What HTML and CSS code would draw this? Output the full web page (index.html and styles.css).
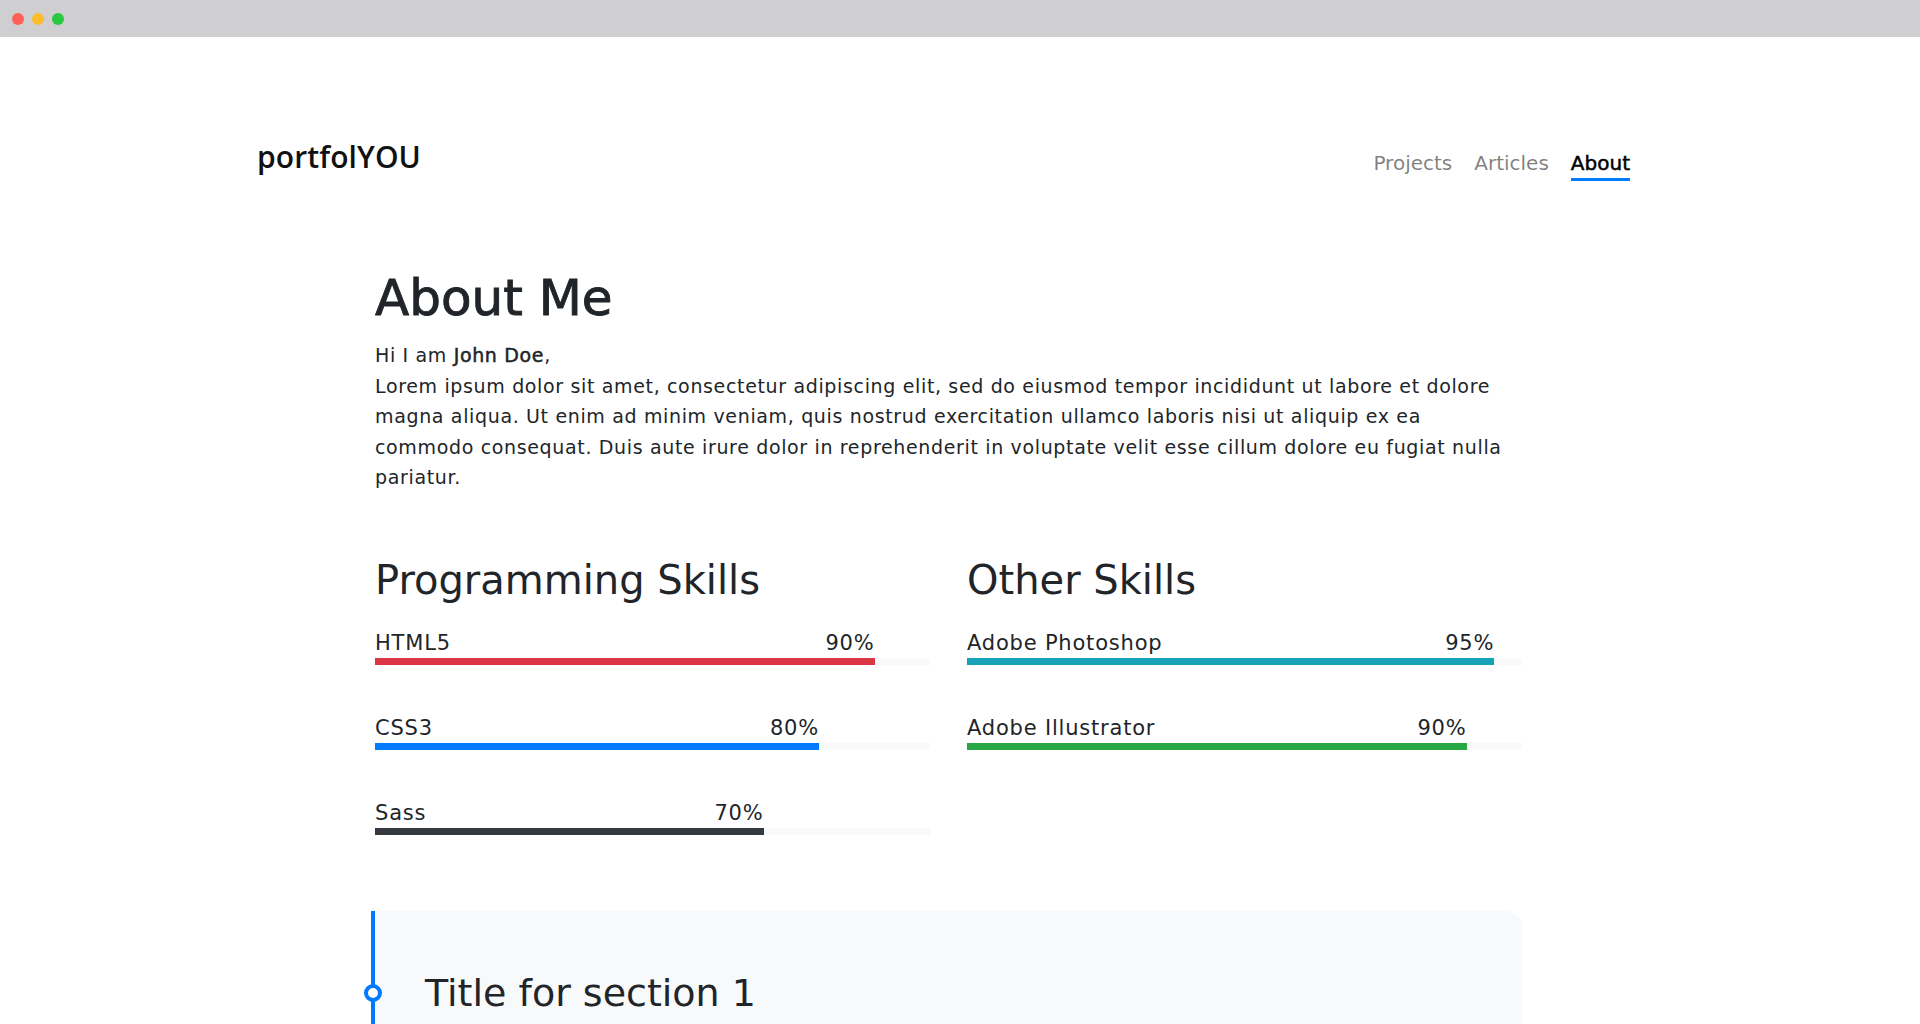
FILE: index.html
```html
<!DOCTYPE html>
<html lang="en">
<head>
<meta charset="utf-8">
<title>About - portfolYOU</title>
<link rel="stylesheet" href="styles.css">
</head>
<body>
<div class="titlebar">
  <span class="dot dot-red"></span>
  <span class="dot dot-yellow"></span>
  <span class="dot dot-green"></span>
</div>

<header class="header">
  <a class="brand" href="#">portfolYOU</a>
  <nav class="nav">
    <a class="nav-link" href="#">Projects</a>
    <a class="nav-link" href="#">Articles</a>
    <a class="nav-link active" href="#">About</a>
  </nav>
</header>

<main class="content">
  <h1 class="page-title">About Me</h1>
  <p class="intro">Hi I am <strong>John Doe</strong>,<br>Lorem ipsum dolor sit amet, consectetur adipiscing elit, sed do eiusmod tempor incididunt ut labore et dolore magna aliqua. Ut enim ad minim veniam, quis nostrud exercitation ullamco laboris nisi ut aliquip ex ea commodo consequat. Duis aute irure dolor in reprehenderit in voluptate velit esse cillum dolore eu fugiat nulla pariatur.</p>

  <div class="skills">
    <section class="skill-group">
      <h2 class="skill-title">Programming Skills</h2>
      <div class="skill">
        <div class="skill-head" style="width:90%"><span>HTML5</span><span>90%</span></div>
        <div class="track"><div class="fill fill-red" style="width:90%"></div></div>
      </div>
      <div class="skill">
        <div class="skill-head" style="width:80%"><span>CSS3</span><span>80%</span></div>
        <div class="track"><div class="fill fill-blue" style="width:80%"></div></div>
      </div>
      <div class="skill">
        <div class="skill-head" style="width:70%"><span>Sass</span><span>70%</span></div>
        <div class="track"><div class="fill fill-dark" style="width:70%"></div></div>
      </div>
    </section>
    <section class="skill-group">
      <h2 class="skill-title">Other Skills</h2>
      <div class="skill">
        <div class="skill-head" style="width:95%"><span>Adobe Photoshop</span><span>95%</span></div>
        <div class="track"><div class="fill fill-teal" style="width:95%"></div></div>
      </div>
      <div class="skill">
        <div class="skill-head" style="width:90%"><span>Adobe Illustrator</span><span>90%</span></div>
        <div class="track"><div class="fill fill-green" style="width:90%"></div></div>
      </div>
    </section>
  </div>

  <section class="timeline">
    <div class="timeline-item">
      <span class="timeline-dot"></span>
      <h3 class="timeline-title">Title for section 1</h3>
    </div>
  </section>
</main>
</body>
</html>
```

FILE: styles.css
```css
* { box-sizing: border-box; }

html, body {
  margin: 0;
  padding: 0;
  background: #ffffff;
}

body {
  font-family: "DejaVu Sans", "Noto Sans", sans-serif;
  color: #212529;
  overflow: hidden;
  height: 1024px;
}

.titlebar {
  height: 37px;
  background: #cfcfd1;
  display: flex;
  align-items: center;
  gap: 8px;
  padding: 1px 0 0 12px;
}

.dot {
  width: 12px;
  height: 12px;
  border-radius: 50%;
  display: block;
}
.dot-red { background: #fe5f57; }
.dot-yellow { background: #febc2e; }
.dot-green { background: #28c840; }

.header {
  width: 1373px;
  margin-left: 257px;
  padding-top: 98px;
  display: flex;
  justify-content: space-between;
  align-items: flex-start;
}

.brand {
  margin-top: 2px;
  font-family: "Open Sans", sans-serif;
  font-weight: 600;
  font-size: 30px;
  line-height: 40px;
  color: #111;
  text-decoration: none;
  letter-spacing: 0.1px;
}

.nav {
  display: flex;
  gap: 22px;
  margin-top: 13px;
}

.nav-link {
  font-size: 20px;
  line-height: 30px;
  color: rgba(0, 0, 0, 0.5);
  text-decoration: none;
  border-bottom: 3px solid transparent;
}

.nav-link.active {
  color: #000;
  -webkit-text-stroke: 0.5px #000;
  border-bottom-color: #007bff;
}

.content {
  width: 1147px;
  margin-left: 375px;
  padding-top: 87px;
}

.page-title {
  margin: 0;
  font-size: 50px;
  line-height: 60px;
  font-weight: 400;
  -webkit-text-stroke: 0.9px #212529;
  color: #212529;
}

.intro {
  margin: 12px 0 0;
  width: 1136px;
  font-size: 19px;
  line-height: 30.6px;
  letter-spacing: 0.65px;
  color: #212529;
}

.intro strong {
  font-weight: 400;
  -webkit-text-stroke: 0.5px #212529;
}

.skills {
  display: grid;
  grid-template-columns: 555px 555px;
  column-gap: 37px;
  margin-top: 63px;
}

.skill-title {
  margin: 0 0 24px;
  font-size: 40px;
  line-height: 48px;
  font-weight: 400;
  color: #212529;
}

.skill {
  margin-bottom: 48px;
}

.skill-head {
  display: flex;
  justify-content: space-between;
  font-size: 21px;
  line-height: 30px;
  letter-spacing: 0.8px;
  color: #212529;
}

.track {
  height: 7px;
  background: #f8f9fa;
}

.fill {
  height: 100%;
}
.fill-red { background: #dc3545; }
.fill-blue { background: #007bff; }
.fill-dark { background: #343a40; }
.fill-teal { background: #17a2b8; }
.fill-green { background: #28a745; }

.timeline {
  margin-top: 28px;
  position: relative;
  background: #f8f9fa;
  border-radius: 0 16px 0 0;
  height: 200px;
  margin-left: -4px;
  width: 1151px;
}

.timeline::before {
  content: "";
  position: absolute;
  left: 0;
  top: 0;
  bottom: 0;
  width: 4px;
  background: #007bff;
}

.timeline-item {
  position: relative;
  padding: 58px 0 0 54px;
}

.timeline-dot {
  position: absolute;
  left: -7px;
  top: 73px;
  width: 18px;
  height: 18px;
  border: 4px solid #007bff;
  border-radius: 50%;
  background: #fff;
}

.timeline-title {
  margin: 0;
  font-size: 38px;
  line-height: 48px;
  font-weight: 400;
  color: #212529;
}
```
